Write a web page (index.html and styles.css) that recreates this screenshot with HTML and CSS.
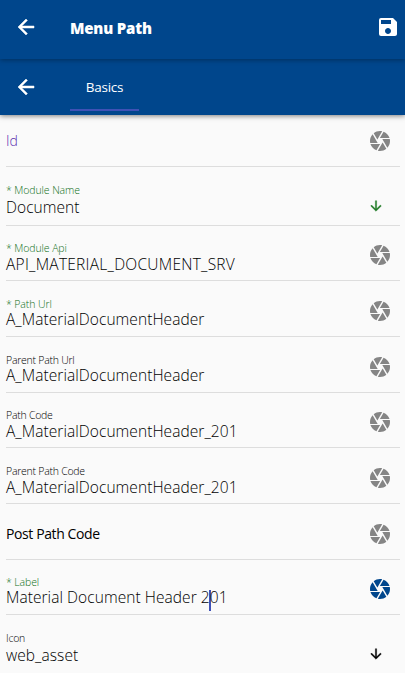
FILE: index.html
```
<!DOCTYPE html>
<html lang="en">
<head>
<meta charset="utf-8">
<title>Menu Path</title>
<link rel="stylesheet" href="styles.css">
</head>
<body>
<svg class="defs" width="0" height="0" aria-hidden="true">
  <symbol id="back" viewBox="0 0 24 24"><path d="M20 11H7.83l5.59-5.59L12 4l-8 8 8 8 1.41-1.41L7.83 13H20v-2z"/></symbol>
  <symbol id="save" viewBox="0 0 24 24"><path d="M17 3H5a2 2 0 0 0-2 2v14a2 2 0 0 0 2 2h14c1.1 0 2-.9 2-2V7l-4-4zm-5 16c-1.66 0-3-1.34-3-3s1.34-3 3-3 3 1.34 3 3-1.34 3-3 3zm3-10H5V5h10v4z"/></symbol>
  <symbol id="camera" viewBox="0 0 24 24"><path d="M9.4 10.5l4.77-8.26C13.47 2.09 12.75 2 12 2c-2.4 0-4.6.85-6.32 2.25l3.66 6.35.06-.1zM21.54 9c-.92-2.92-3.15-5.26-6-6.34L11.88 9h9.66zm.26 1h-7.49l.29.5 4.76 8.25C21 16.97 22 14.61 22 12c0-.69-.07-1.35-.2-2zM8.54 12l-3.9-6.75C3.01 7.03 2 9.39 2 12c0 .69.07 1.35.2 2h7.49l-1.15-2zm-6.08 3c.92 2.92 3.15 5.26 6 6.34L12.12 15H2.46zm11.27 0l-3.9 6.76c.7.15 1.42.24 2.17.24 2.4 0 4.6-.85 6.32-2.25l-3.66-6.35-.93 1.6z"/></symbol>
  <symbol id="down" viewBox="0 0 24 24"><path d="M20 12l-1.41-1.41L13 16.17V4h-2v12.17l-5.58-5.59L4 12l8 8 8-8z"/></symbol>
</svg>
<header class="toolbar">
  <svg class="icon nav"><use href="#back"/></svg>
  <h1>Menu Path</h1>
  <svg class="icon save"><use href="#save"/></svg>
</header>
<nav class="tabs">
  <svg class="icon nav"><use href="#back"/></svg>
  <div class="tab"><span>Basics</span></div>
</nav>
<main>
  <section class="row first"><div class="text"><span class="empty id">Id</span></div><svg class="icon camera"><use href="#camera"/></svg></section>
  <section class="row select"><div class="text"><span class="label req">* Module Name</span><span class="value">Document</span></div><svg class="icon arrow green"><use href="#down"/></svg></section>
  <section class="row short"><div class="text"><span class="label req">* Module Api</span><span class="value api">API_MATERIAL_DOCUMENT_SRV</span></div><svg class="icon camera"><use href="#camera"/></svg></section>
  <section class="row"><div class="text"><span class="label req">* Path Url</span><span class="value">A_MaterialDocumentHeader</span></div><svg class="icon camera"><use href="#camera"/></svg></section>
  <section class="row"><div class="text"><span class="label">Parent Path Url</span><span class="value">A_MaterialDocumentHeader</span></div><svg class="icon camera"><use href="#camera"/></svg></section>
  <section class="row short"><div class="text"><span class="label">Path Code</span><span class="value">A_MaterialDocumentHeader_201</span></div><svg class="icon camera"><use href="#camera"/></svg></section>
  <section class="row low"><div class="text"><span class="label">Parent Path Code</span><span class="value">A_MaterialDocumentHeader_201</span></div><svg class="icon camera"><use href="#camera"/></svg></section>
  <section class="row"><div class="text"><span class="empty">Post Path Code</span></div><svg class="icon camera"><use href="#camera"/></svg></section>
  <section class="row short focused"><div class="text"><span class="label req">* Label</span><span class="value">Material Document Header 2<i class="caret"></i>01</span></div><svg class="icon camera active"><use href="#camera"/></svg></section>
  <section class="row last"><div class="text"><span class="label">Icon</span><span class="value">web_asset</span></div><svg class="icon arrow"><use href="#down"/></svg></section>
</main>
</body>
</html>
```
FILE: styles.css
```
* { box-sizing: border-box; }
html, body { height: 100%; }
body { margin: 0; overflow: hidden; background: #fafafa; color: #000; font-family: "Open Sans", "Noto Sans", sans-serif; }
.defs { position: absolute; }
.icon { display: block; flex: none; width: 24px; height: 24px; fill: currentColor; }
.nav, .arrow { stroke: currentColor; stroke-width: .5px; }
.toolbar, .tabs { display: flex; color: #fff; background: #00468c; padding-left: 14px; }
.toolbar { height: 59px; padding-top: 15px; position: relative; z-index: 2; box-shadow: 0 1px 5px rgba(0,0,0,.35); }
.toolbar h1 { margin: 2px 0 0 32px; font-size: 15px; line-height: 22px; font-weight: 800; letter-spacing: -.2px; }
.save { margin: 0 5px 0 auto; }
.tabs { height: 56px; padding-top: 16px; position: relative; z-index: 1; box-shadow: 0 1px 5px rgba(0,0,0,.5); }
.tab { width: 69px; height: 36px; margin-left: 32px; border-bottom: 2px solid #3f51b5; text-align: center; font-size: 13.5px; line-height: 24px; letter-spacing: -.25px; }
.row { height: 56px; margin: 0 5px 0 6px; border-bottom: 1px solid #ddd; display: flex; align-items: flex-end; }
.text { flex: 1; display: flex; flex-direction: column; white-space: nowrap; padding-bottom: 8px; }
.label { font-size: 10.5px; line-height: 12px; font-weight: 360; letter-spacing: -.25px; }
.label.req { color: #0f7018; letter-spacing: -.1px; }
.value { font-size: 15.5px; line-height: 18px; font-weight: 340; letter-spacing: .06px; }
.value.api { letter-spacing: .26px; }
.empty { font-size: 14px; line-height: 20px; margin-bottom: 7px; letter-spacing: -.4px; font-weight: 370; }
.empty.id { color: #5a30b0; font-weight: 340; letter-spacing: 0; }
.camera { margin: 0 8px 13px 0; color: #858585; }
.camera.active { color: #00468c; }
.arrow { width: 16px; height: 16px; margin: 0 16px 11px 0; }
.arrow.green { color: #1f7a25; }
.first { height: 52px; }
.select { height: 59px; }
.short { height: 55px; }
.last { height: 58px; border: 0; }
.short .text, .low .text { padding-bottom: 7px; }
.short .label, .low .label { margin-bottom: 1px; }
.short.focused .label { margin-bottom: 0; }
.select .text, .last .text { padding-bottom: 9px; }
.select .label, .last .label { margin-bottom: 2px; }
.caret { display: inline-block; width: 2px; height: 21px; margin: -3px -1px -4px; background: #3f51b5; vertical-align: -4px; }
```
